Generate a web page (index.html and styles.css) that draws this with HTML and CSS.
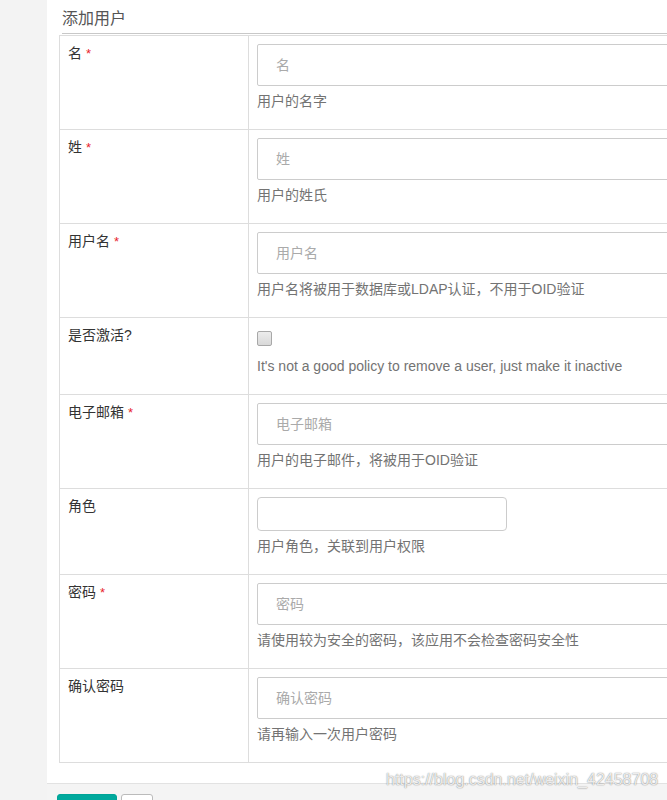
FILE: index.html
```html
<!DOCTYPE html>
<html lang="zh-CN">
<head>
<meta charset="utf-8">
<title>添加用户</title>
<link rel="stylesheet" href="styles.css">
</head>
<body>
<div class="page">
  <div class="panel">
    <div class="panel-body">
      <h3 class="title">添加用户</h3>
      <div class="form-table">
        <div class="row">
          <div class="label">名 <span class="req">*</span></div>
          <div class="field">
            <input class="input" type="text" placeholder="名">
            <div class="help">用户的名字</div>
          </div>
        </div>
        <div class="row">
          <div class="label">姓 <span class="req">*</span></div>
          <div class="field">
            <input class="input" type="text" placeholder="姓">
            <div class="help">用户的姓氏</div>
          </div>
        </div>
        <div class="row">
          <div class="label">用户名 <span class="req">*</span></div>
          <div class="field">
            <input class="input" type="text" placeholder="用户名">
            <div class="help">用户名将被用于数据库或LDAP认证，不用于OID验证</div>
          </div>
        </div>
        <div class="row">
          <div class="label">是否激活?</div>
          <div class="field">
            <div class="check-wrap"><input class="check" type="checkbox"></div>
            <div class="help">It's not a good policy to remove a user, just make it inactive</div>
          </div>
        </div>
        <div class="row">
          <div class="label">电子邮箱 <span class="req">*</span></div>
          <div class="field">
            <input class="input" type="text" placeholder="电子邮箱">
            <div class="help">用户的电子邮件，将被用于OID验证</div>
          </div>
        </div>
        <div class="row">
          <div class="label">角色</div>
          <div class="field">
            <div class="select"></div>
            <div class="help">用户角色，关联到用户权限</div>
          </div>
        </div>
        <div class="row">
          <div class="label">密码 <span class="req">*</span></div>
          <div class="field">
            <input class="input" type="password" placeholder="密码">
            <div class="help">请使用较为安全的密码，该应用不会检查密码安全性</div>
          </div>
        </div>
        <div class="row">
          <div class="label">确认密码</div>
          <div class="field">
            <input class="input" type="password" placeholder="确认密码">
            <div class="help">请再输入一次用户密码</div>
          </div>
        </div>
      </div>
    </div>
    <div class="footer">
      <button class="btn btn-primary" type="button"></button>
      <button class="btn btn-default" type="button"></button>
    </div>
  </div>
  <div class="watermark">https://blog.csdn.net/weixin_42458708</div>
</div>
</body>
</html>
```

FILE: styles.css
```css
html, body {
  margin: 0;
  padding: 0;
  overflow: hidden;
  height: 800px;
}
body {
  background: #f3f3f3;
  font-family: "Liberation Sans", "Noto Sans CJK SC", sans-serif;
  font-size: 14px;
  color: #333;
}
.page {
  position: relative;
  height: 800px;
}
.panel {
  margin-left: 47px;
  width: 900px;
  background: #fff;
}
.panel-body {
  padding: 0 0 20px 12px;
}
.title {
  margin: 0 0 1px 3px;
  padding: 8px 0 3px 0;
  font-size: 16px;
  line-height: 22px;
  font-weight: normal;
  color: #555;
  border-bottom: 1px solid #c8c8c8;
}
.form-table {
  border: 1px solid #ddd;
  border-bottom: 0;
}
.row {
  display: grid;
  grid-template-columns: 189px 1fr;
  border-bottom: 1px solid #ddd;
}
.label {
  box-sizing: border-box;
  padding: 8px;
  font-size: 14px;
  line-height: 18px;
  border-right: 1px solid #ddd;
  color: #333;
}
.req {
  color: #e8232b;
  font-size: 13px;
}
.field {
  padding: 8px;
}
.input {
  display: block;
  box-sizing: border-box;
  width: 600px;
  height: 42px;
  margin: 0;
  padding: 0 12px 0 18px;
  border: 1px solid #ccc;
  border-radius: 2px;
  font-family: inherit;
  font-size: 14px;
  color: #555;
  background: #fff;
  outline: none;
}
.input::placeholder {
  color: #aaa;
}
.check-wrap {
  box-sizing: border-box;
  height: 25px;
  padding-top: 5px;
}
.check {
  display: block;
  appearance: none;
  -webkit-appearance: none;
  box-sizing: border-box;
  width: 15px;
  height: 15px;
  margin: 0;
  border: 1px solid #a8a8a8;
  border-radius: 2px;
  background: linear-gradient(#ececec, #d9d9d9);
}
.select {
  box-sizing: border-box;
  width: 250px;
  height: 34px;
  border: 1px solid #ccc;
  border-radius: 4px;
  background: #fff;
}
.help {
  margin: 5px 0 10px 0;
  font-size: 14px;
  line-height: 20px;
  color: #737373;
}
.footer {
  border-top: 1px solid #e2e2e2;
  background: #f4f4f4;
  padding: 10px 0 0 10px;
  height: 40px;
  display: flex;
  gap: 4px;
}
.btn {
  height: 32px;
  margin: 0;
  padding: 0;
  border-radius: 3px;
  font-family: inherit;
}
.btn-primary {
  width: 60px;
  border: 1px solid #00a497;
  background: #00a99d;
}
.btn-default {
  width: 32px;
  border: 1px solid #bbb;
  background: #fff;
}
.watermark {
  position: absolute;
  left: 386px;
  top: 770px;
  font-family: "Liberation Sans", sans-serif;
  font-size: 16px;
  line-height: 20px;
  color: rgba(255, 255, 255, 0.85);
  text-shadow: 0 0 1px rgba(0, 0, 0, 0.45), 0 0 2px rgba(0, 0, 0, 0.2);
  white-space: nowrap;
}
```
